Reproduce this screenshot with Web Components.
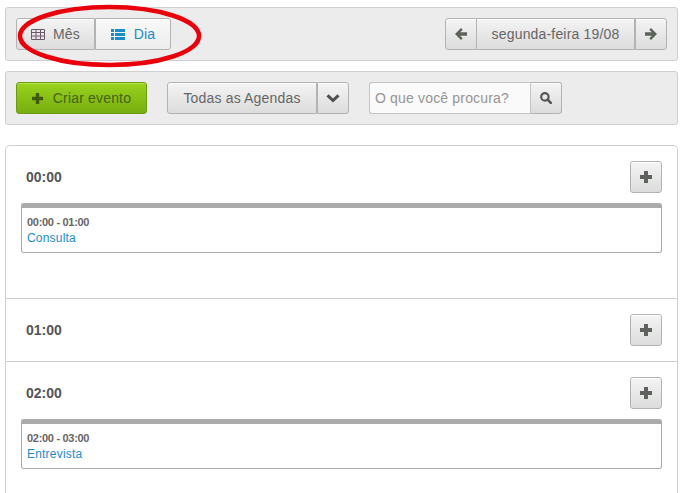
<!DOCTYPE html>
<html>
<head>
<meta charset="UTF-8"/>
<style>
    html, body { margin: 0; padding: 0; background: #fff; }
    body { font-family: "Liberation Sans", Arial, sans-serif; font-size: 14px; color: #555; overflow: hidden; height: 493px; }
    #root { position: relative; box-sizing: border-box; height: 493px; padding: 7px 8px 0 5px; display: flex; flex-direction: column; }
    ag-toolbar + ag-toolbar { margin-top: 10px; }
    ag-panel { margin-top: 20px; flex: 1; }
</style>
</head>
<body>

<template id="btn-tpl">
    <style>
        :host { display: inline-flex; box-sizing: border-box; height: 32px; align-items: center; justify-content: center; gap: var(--gap, 8px);
            border: 1px solid #b3b3b3; border-radius: 3px; background: linear-gradient(#f4f4f4, #dcdcdc); color: #666; font-size: 14px; letter-spacing: .17px;
            box-shadow: inset 0 1px 0 #fff; white-space: nowrap; }
        :host([first]) { border-radius: 3px 0 0 3px; }
        :host([middle]) { border-radius: 0; border-left: 0; }
        :host([last]) { border-radius: 0 3px 3px 0; border-left: 1px solid #b3b3b3; }
        :host([active]) { background: linear-gradient(#f9f9f9, #ededed); color: #1b8ccb; border-left: 1px solid #b3b3b3; }
        :host([green]) { background: linear-gradient(#98d31c, #78ad10); border-color: #6c9a12; color: #46620f; box-shadow: inset 0 1px 0 #b2e24c; }
    </style>
    <slot></slot>
</template>

<template id="toolbar-tpl">
    <style>
        :host { display: flex; box-sizing: border-box; height: 54px; padding: 10px; align-items: center; background: #ececec; border: 1px solid #cfcfcf; border-radius: 3px; }
    </style>
    <slot></slot>
</template>

<template id="group-tpl">
    <style>
        :host { display: inline-flex; }
    </style>
    <slot></slot>
</template>

<template id="search-tpl">
    <style>
        :host { display: inline-flex; }
        .field { box-sizing: border-box; width: 161px; height: 32px; line-height: 30px; padding-left: 5px; border: 1px solid #c4c4c4; border-right: 0; border-radius: 3px 0 0 3px; background: #fafafa; color: #959595; font-size: 14px; letter-spacing: .17px; }
    </style>
    <div class="field">O que você procura?</div>
    <ag-btn last style="width:32px;border-left:1px solid #c4c4c4">
        <svg width="12" height="12" viewBox="0 0 12 12"><circle cx="4.900" cy="4.900" r="3.700" fill="none" stroke="#555" stroke-width="2.200"/><path d="M7.600 7.600L10.800 10.800" stroke="#555" stroke-width="2.600" stroke-linecap="round"/></svg>
    </ag-btn>
</template>

<template id="panel-tpl">
    <style>
        :host { display: block; box-sizing: border-box; border: 1px solid #cfcfcf; border-bottom: 0; border-radius: 5px 5px 0 0; background: #fff; }
    </style>
    <slot></slot>
</template>

<template id="hour-tpl">
    <style>
        :host { display: block; box-sizing: border-box; padding: 15px 15px 0 15px; border-bottom: 1px solid #cfcfcf; }
        :host(:last-child) { border-bottom: 0; }
        .head { display: flex; justify-content: space-between; align-items: center; height: 32px; padding-left: 5px; }
        .time { font-weight: bold; font-size: 14px; color: #555; }
        .list { padding-top: 10px; }
    </style>
    <div class="head">
        <span class="time"></span>
        <ag-btn style="width:32px">
            <svg width="12" height="12" viewBox="0 0 12 12"><path d="M4 0h4v4h4v4H8v4H4V8H0V4h4z" fill="#5e625c"/></svg>
        </ag-btn>
    </div>
    <div class="list"><slot></slot></div>
</template>

<template id="event-tpl">
    <style>
        :host { display: block; box-sizing: border-box; height: 50px; border: 1px solid #aaa; border-top: 5px solid #aaa; border-radius: 3px; padding: 7px 5px 0 5px; background: #fff; }
        .range { font-size: 11px; font-weight: bold; line-height: 14px; color: #666; letter-spacing: -.3px; }
        .title { font-size: 12px; line-height: 19px; color: #1b8ccb; letter-spacing: .2px; }
    </style>
    <div class="range"></div>
    <div class="title"></div>
</template>

<div id="root">
    <ag-toolbar>
        <ag-group>
            <ag-btn first style="width:79px">
                <svg width="14" height="11" viewBox="0 0 14 11"><path d="M.5.5h13v10H.5zM.5 3.500h13M.5 7h13M5 .5v10M9.500 .5v10" fill="none" stroke="#6b5a6b" stroke-width="1"/></svg>
                <span>Mês</span>
            </ag-btn>
            <ag-btn active last style="width:76px;--gap:9px">
                <svg width="14" height="11" viewBox="0 0 14 11" fill="#1b8ccb"><path d="M0 0h3v3H0zM4 0h10v3H4zM0 4h3v3H0zM4 4h10v3H4zM0 8h3v3H0zM4 8h10v3H4z"/></svg>
                <span>Dia</span>
            </ag-btn>
        </ag-group>
        <ag-group style="margin-left:auto">
            <ag-btn first style="width:32px">
                <svg width="12" height="12" viewBox="0 0 12 12"><path d="M6 0L0 6l6 6 1.700-1.700L5.200 7.700H12V4.300H5.200l2.500-2.600z" fill="#5e625c"/></svg>
            </ag-btn>
            <ag-btn middle style="width:158px">segunda-feira 19/08</ag-btn>
            <ag-btn last style="width:32px">
                <svg width="12" height="12" viewBox="0 0 12 12"><path d="M6 0l6 6-6 6-1.700-1.700 2.500-2.600H0V4.300h6.800L4.300 1.700z" fill="#5e625c"/></svg>
            </ag-btn>
        </ag-group>
    </ag-toolbar>

    <ag-toolbar>
        <ag-btn green style="width:131px;--gap:10px">
            <svg width="11" height="11" viewBox="0 0 11 11"><path d="M3.800 0h3.400v3.800H11v3.400H7.200V11H3.800V7.200H0V3.800h3.800z" fill="#3f5a10"/></svg>
            <span>Criar evento</span>
        </ag-btn>
        <ag-group style="margin-left:20px">
            <ag-btn first style="width:150px">Todas as Agendas</ag-btn>
            <ag-btn last style="width:32px">
                <svg width="14" height="10" viewBox="0 0 14 10"><path d="M1.500 2.300L7 7.500l5.500-5.200" fill="none" stroke="#4f4f4f" stroke-width="3"/></svg>
            </ag-btn>
        </ag-group>
        <ag-search style="margin-left:20px"></ag-search>
    </ag-toolbar>

    <ag-panel>
        <ag-hour time="00:00" style="height:153px">
            <ag-event range="00:00 - 01:00" title-text="Consulta"></ag-event>
        </ag-hour>
        <ag-hour time="01:00" style="height:63px"></ag-hour>
        <ag-hour time="02:00">
            <ag-event range="02:00 - 03:00" title-text="Entrevista"></ag-event>
        </ag-hour>
    </ag-panel>

    <svg style="position:absolute;left:0;top:0;pointer-events:none" width="686" height="100">
        <ellipse cx="109.500" cy="36" rx="89.500" ry="29" fill="none" stroke="#e8000b" stroke-width="4.500"/>
    </svg>
</div>

<script>
    // Generate Custom Elements

    function cloneTpl(el, id) {
        const root = el.attachShadow({ mode: 'open' });
        root.appendChild(document.getElementById(id).content.cloneNode(true));
        return root;
    }

    function simpleElement(tagName, tplId) {
        window.customElements.define(tagName, class extends HTMLElement {
            constructor() {
                super();
                cloneTpl(this, tplId);
            }
        });
    }

    simpleElement('ag-btn', 'btn-tpl');
    simpleElement('ag-toolbar', 'toolbar-tpl');
    simpleElement('ag-group', 'group-tpl');
    simpleElement('ag-search', 'search-tpl');
    simpleElement('ag-panel', 'panel-tpl');

    window.customElements.define('ag-hour', class extends HTMLElement {
        constructor() {
            super();
            this._root = cloneTpl(this, 'hour-tpl');
        }
        connectedCallback() {
            this._root.querySelector('.time').textContent = this.getAttribute('time');
        }
    });

    window.customElements.define('ag-event', class extends HTMLElement {
        constructor() {
            super();
            this._root = cloneTpl(this, 'event-tpl');
        }
        connectedCallback() {
            this._root.querySelector('.range').textContent = this.getAttribute('range');
            this._root.querySelector('.title').textContent = this.getAttribute('title-text');
        }
    });
</script>
</body>
</html>
